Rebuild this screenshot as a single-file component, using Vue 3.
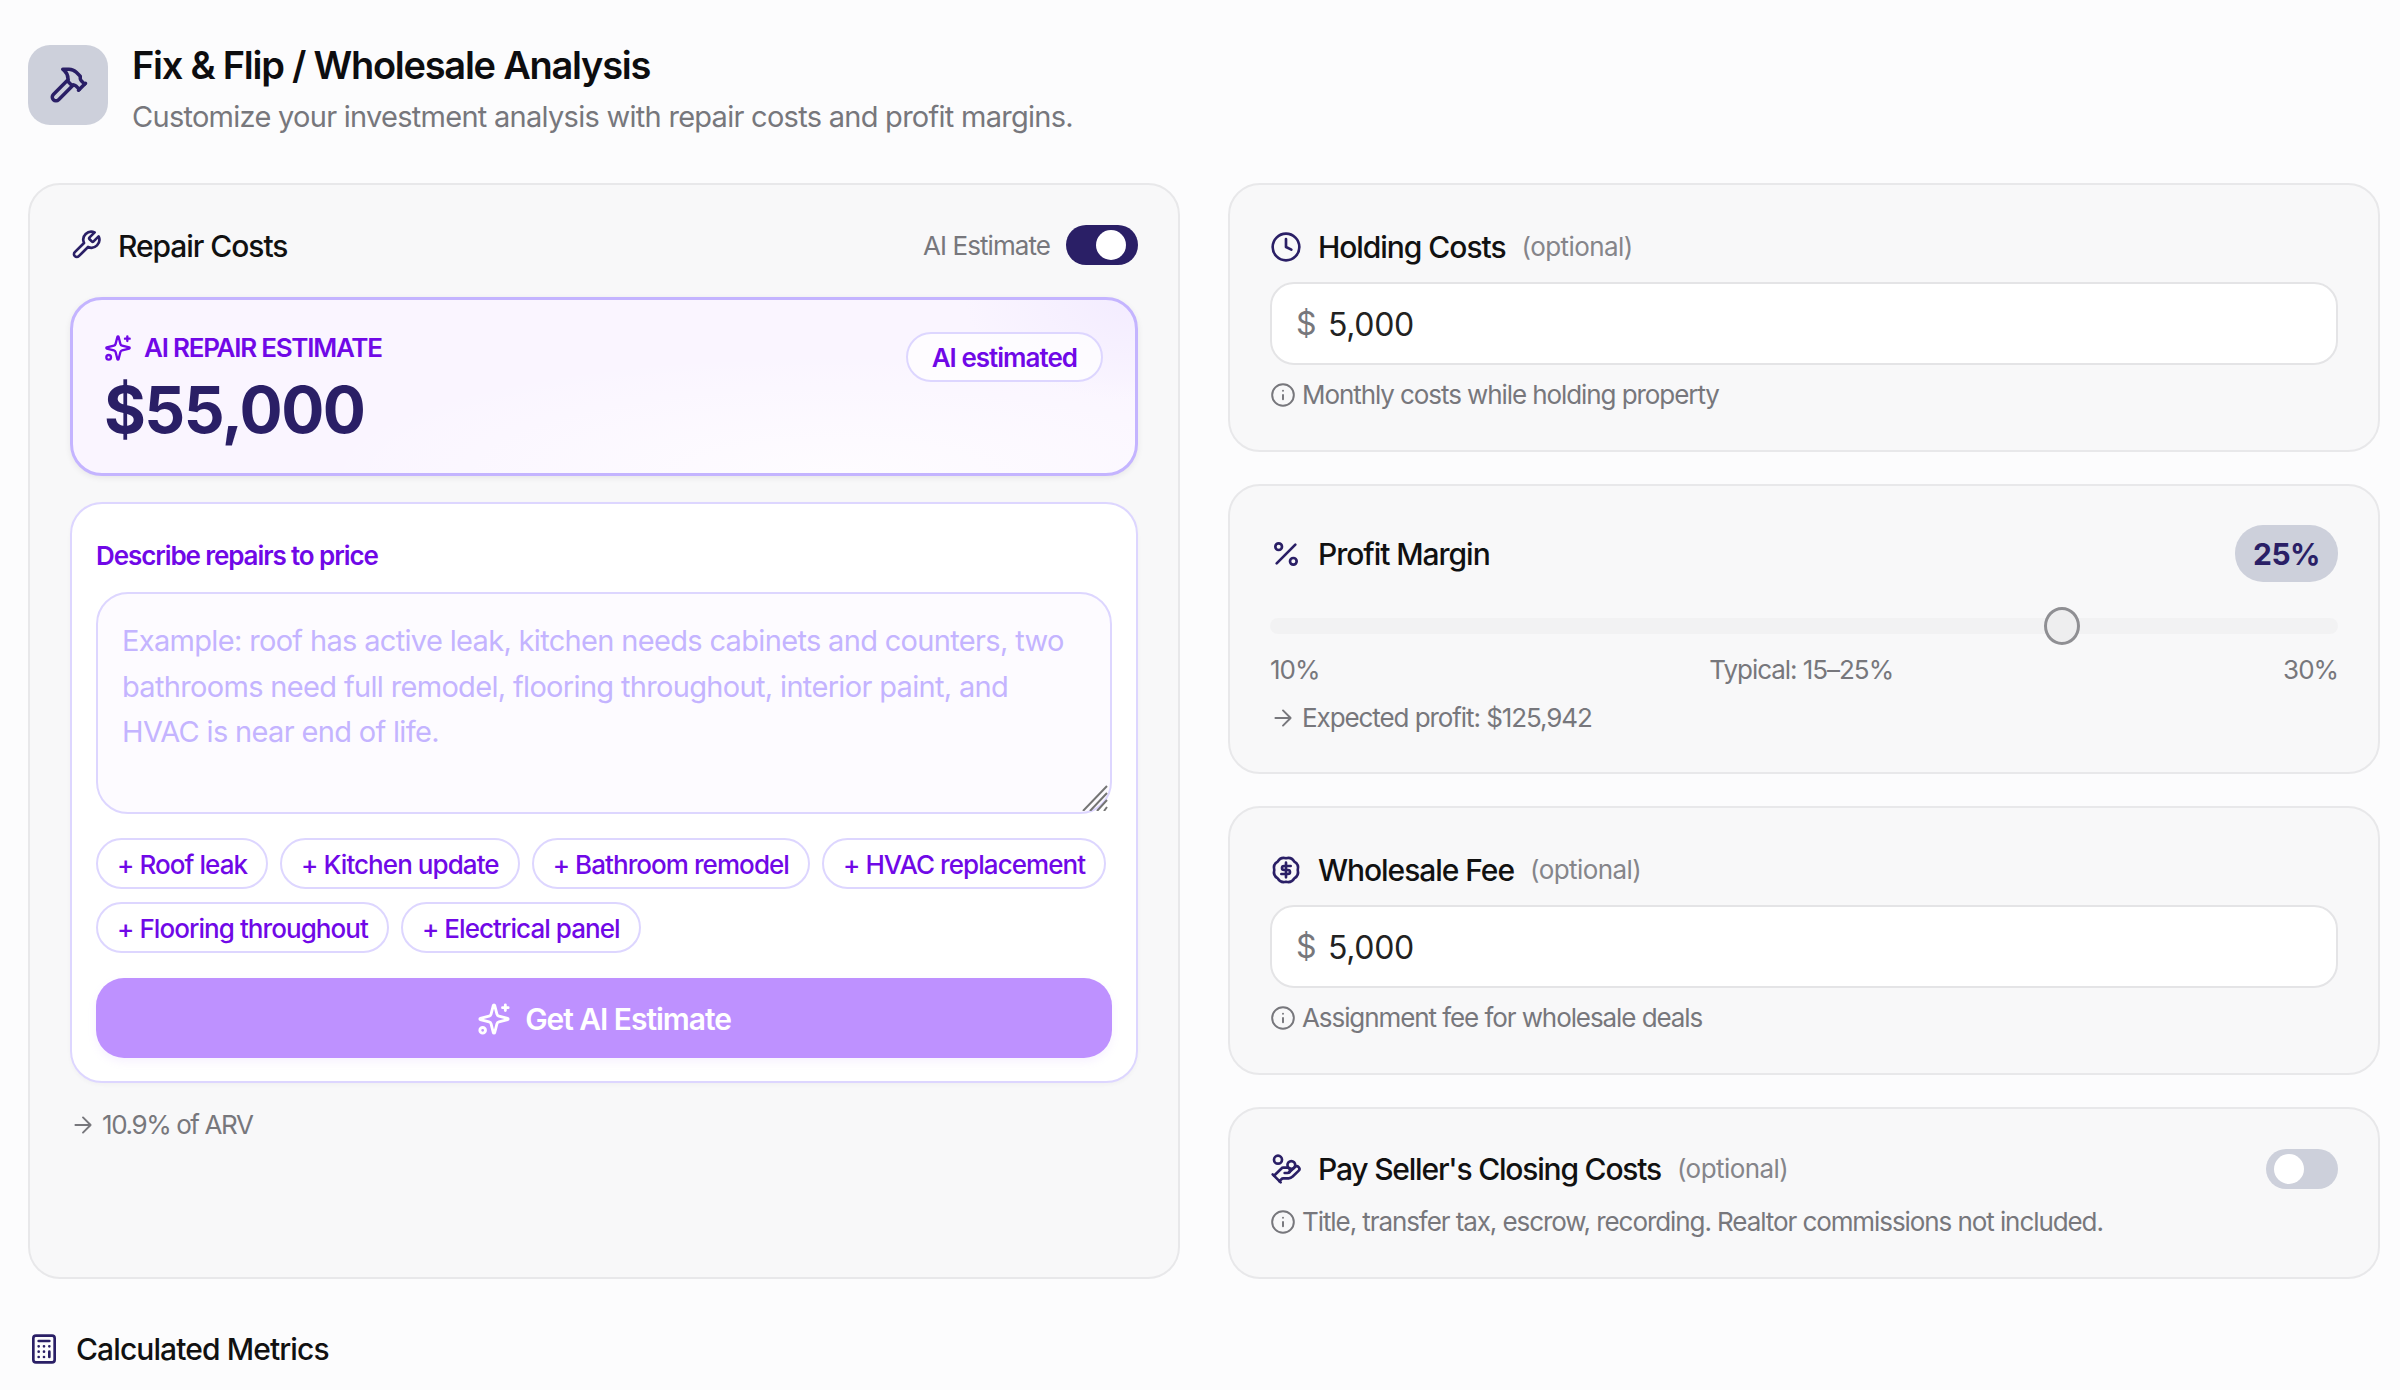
<template>
  <main class="page">
    <!-- Header -->
    <header class="head">
      <div class="head-icon">
        <svg class="ico" width="42" height="42" viewBox="0 0 24 24">
          <path d="m15 12-8.373 8.373a1 1 0 1 1-3-3L12 9" />
          <path d="m18 15 4-4" />
          <path d="m21.5 11.5-1.914-1.914A2 2 0 0 1 19 8.172V7l-2.26-2.26a6 6 0 0 0-4.202-1.756L9 2.96l.92.82A6.18 6.18 0 0 1 12 8.4V10l2 2h1.172a2 2 0 0 1 1.414.586L18.5 14.5" />
        </svg>
      </div>
      <div>
        <h1 class="title">Fix &amp; Flip / Wholesale Analysis</h1>
        <p class="sub">Customize your investment analysis with repair costs and profit margins.</p>
      </div>
    </header>

    <div class="cols">
      <!-- Repair costs -->
      <section class="card repair">
        <div class="row between">
          <div class="card-title">
            <svg class="ico" width="32" height="32" viewBox="0 0 24 24">
              <path d="M14.7 6.3a1 1 0 0 0 0 1.4l1.6 1.6a1 1 0 0 0 1.4 0l3.77-3.77a6 6 0 0 1-7.94 7.94l-6.91 6.91a2.12 2.12 0 0 1-3-3l6.91-6.91a6 6 0 0 1 7.94-7.94l-3.76 3.76z" />
            </svg>
            <span>Repair Costs</span>
          </div>
          <div class="ai-switch">
            <span>AI Estimate</span>
            <button class="toggle" :class="{ on: aiOn }" @click="aiOn = !aiOn"><i /></button>
          </div>
        </div>

        <div class="estimate">
          <div>
            <div class="est-label">
              <svg class="ico" width="28" height="28" viewBox="0 0 24 24">
                <path :d="sparkle" /><path d="M20 2v4M22 4h-4" /><circle cx="4" cy="20" r="2" />
              </svg>
              AI REPAIR ESTIMATE
            </div>
            <div class="est-value">$55,000</div>
          </div>
          <span class="badge">AI estimated</span>
        </div>

        <div class="describe">
          <label class="desc-label">Describe repairs to price</label>
          <div class="desc-wrap">
            <textarea class="desc-input" placeholder="Example: roof has active leak, kitchen needs cabinets and counters, two bathrooms need full remodel, flooring throughout, interior paint, and HVAC is near end of life." />
            <!-- resize grip -->
            <svg class="grip" width="26" height="26" viewBox="0 0 26 26">
              <path d="M1 26 25 1M8 26 25 8M15 26 25 15M22 26l3-4" />
            </svg>
          </div>
          <div class="chips">
            <button v-for="c in chips" :key="c" class="chip">+ {{ c }}</button>
          </div>
          <button class="ai-btn">
            <svg class="ico" width="34" height="34" viewBox="0 0 24 24">
              <path :d="sparkle" /><path d="M20 2v4M22 4h-4" /><circle cx="4" cy="20" r="2" />
            </svg>
            Get AI Estimate
          </button>
        </div>

        <div class="hint note">
          <svg class="ico grey" width="26" height="26" viewBox="0 0 24 24"><path d="M5 12h14M12 5l7 7-7 7" /></svg>
          <span>10.9% of ARV</span>
        </div>
      </section>

      <div class="stack">
        <!-- Holding costs -->
        <section class="card">
          <div class="card-title">
            <svg class="ico" width="32" height="32" viewBox="0 0 24 24">
              <circle cx="12" cy="12" r="10" /><path d="M12 6v6l4 2" />
            </svg>
            <span>Holding Costs</span>
            <em class="opt">(optional)</em>
          </div>
          <div class="money">
            <span>$</span>
            <input v-model="holding" />
          </div>
          <div class="hint">
            <svg class="ico grey" width="26" height="26" viewBox="0 0 24 24">
              <circle cx="12" cy="12" r="10" /><path d="M12 16v-4M12 8h.01" />
            </svg>
            <span>Monthly costs while holding property</span>
          </div>
        </section>

        <!-- Profit margin -->
        <section class="card margin">
          <div class="row between">
            <div class="card-title">
              <svg class="ico" width="32" height="32" viewBox="0 0 24 24">
                <path d="M19 5 5 19" /><circle cx="6.5" cy="6.5" r="2.5" /><circle cx="17.5" cy="17.5" r="2.5" />
              </svg>
              <span>Profit Margin</span>
            </div>
            <span class="pill">{{ margin }}%</span>
          </div>
          <input v-model="margin" class="slider" type="range" min="10" max="30" />
          <div class="scale">
            <span>10%</span>
            <span>Typical: 15–25%</span>
            <span>30%</span>
          </div>
          <div class="hint">
            <svg class="ico grey" width="26" height="26" viewBox="0 0 24 24"><path d="M5 12h14M12 5l7 7-7 7" /></svg>
            <span>Expected profit: $125,942</span>
          </div>
        </section>

        <!-- Wholesale fee -->
        <section class="card">
          <div class="card-title">
            <svg class="ico" width="32" height="32" viewBox="0 0 24 24">
              <path :d="rosette" /><path d="M15.5 9h-5a1.5 1.5 0 0 0 0 3h3a1.5 1.5 0 0 1 0 3h-5M12 6.5v11" />
            </svg>
            <span>Wholesale Fee</span>
            <em class="opt">(optional)</em>
          </div>
          <div class="money">
            <span>$</span>
            <input v-model="fee" />
          </div>
          <div class="hint">
            <svg class="ico grey" width="26" height="26" viewBox="0 0 24 24">
              <circle cx="12" cy="12" r="10" /><path d="M12 16v-4M12 8h.01" />
            </svg>
            <span>Assignment fee for wholesale deals</span>
          </div>
        </section>

        <!-- Closing costs -->
        <section class="card closing">
          <div class="row between">
            <div class="card-title">
              <svg class="ico" width="32" height="32" viewBox="0 0 24 24">
                <path d="M11 15h2a2 2 0 1 0 0-4h-3c-.6 0-1.1.2-1.4.6L3 17" />
                <path d="m7 21 1.6-1.4c.3-.4.8-.6 1.4-.6h4c1.1 0 2.1-.4 2.8-1.2l4.6-4.4a2 2 0 0 0-2.75-2.91l-4.2 3.9" />
                <path d="m2 16 6 6" />
                <circle cx="16" cy="9" r="2.9" />
                <circle cx="6" cy="5" r="3" />
              </svg>
              <span>Pay Seller's Closing Costs</span>
              <em class="opt">(optional)</em>
            </div>
            <button class="toggle" :class="{ on: closingOn }" @click="closingOn = !closingOn"><i /></button>
          </div>
          <div class="hint">
            <svg class="ico grey" width="26" height="26" viewBox="0 0 24 24">
              <circle cx="12" cy="12" r="10" /><path d="M12 16v-4M12 8h.01" />
            </svg>
            <span>Title, transfer tax, escrow, recording. Realtor commissions not included.</span>
          </div>
        </section>
      </div>
    </div>

    <div class="card-title metrics">
      <svg class="ico" width="32" height="32" viewBox="0 0 24 24">
        <rect x="4" y="2" width="16" height="20" rx="2" />
        <path d="M8 6h8M16 14v4M16 10h.01M12 10h.01M8 10h.01M12 14h.01M8 14h.01M12 18h.01M8 18h.01" />
      </svg>
      <span>Calculated Metrics</span>
    </div>
  </main>
</template>

<script setup>
import { ref } from 'vue'

const aiOn = ref(true)
const closingOn = ref(false)
const holding = ref('5,000')
const fee = ref('5,000')
const margin = ref(25)

const chips = [
  'Roof leak',
  'Kitchen update',
  'Bathroom remodel',
  'HVAC replacement',
  'Flooring throughout',
  'Electrical panel',
]

const sparkle = 'M9.937 15.5A2 2 0 0 0 8.5 14.063l-6.135-1.582a.5.5 0 0 1 0-.962L8.5 9.936A2 2 0 0 0 9.937 8.5l1.582-6.135a.5.5 0 0 1 .963 0L14.063 8.5A2 2 0 0 0 15.5 9.937l6.135 1.581a.5.5 0 0 1 0 .964L15.5 14.063a2 2 0 0 0-1.437 1.437l-1.582 6.135a.5.5 0 0 1-.963 0z'

// scalloped badge outline, eight lobes
function scallop(lobes, r) {
  let d = ''
  for (let i = 0; i <= lobes; i++) {
    const a = (i / lobes) * Math.PI * 2
    const x = (12 + r * Math.cos(a)).toFixed(2)
    const y = (12 + r * Math.sin(a)).toFixed(2)
    d += i === 0 ? `M${x} ${y}` : `A5.5 5.5 0 0 1 ${x} ${y}`
  }
  return d + 'z'
}
const rosette = scallop(8, 8.8)
</script>

<style scoped>
.page {
  font-family: 'Inter', 'Noto Sans', sans-serif;
  padding: 45px 20px 0 28px;
  color: #111;
  letter-spacing: -0.56px;
}

.ico {
  fill: none;
  stroke: #2a1f66;
  stroke-width: 2;
  stroke-linecap: round;
  stroke-linejoin: round;
  flex: none;
}
.ico.grey { stroke: #77777c; stroke-width: 1.8; }

.head { display: flex; gap: 24px; align-items: flex-start; margin-bottom: 50px; }
.head-icon {
  width: 80px;
  height: 80px;
  border-radius: 22px;
  background: #cdd0db;
  display: flex;
  align-items: center;
  justify-content: center;
}
.title { margin: 0; font-size: 38px; line-height: 40px; font-weight: 600; color: #0d0d0f; letter-spacing: -0.033em; }
.sub { margin: 16px 0 0; font-size: 29px; line-height: 32px; color: #77777c; font-weight: 400; letter-spacing: -0.025em; }

.cols { display: grid; grid-template-columns: 1fr 1fr; gap: 48px; }
.stack { display: flex; flex-direction: column; gap: 32px; min-width: 0; }

.card {
  background: #f8f8f9;
  border: 2px solid #e8e8ea;
  border-radius: 32px;
  padding: 44px 40px 39px;
  min-width: 0;
}
.card.repair { padding-top: 40px; }
.card.margin { padding-top: 39px; padding-bottom: 38px; }
.card.closing { padding-top: 40px; }

.row { display: flex; align-items: center; }
.between { justify-content: space-between; }

.card-title {
  display: flex;
  align-items: center;
  gap: 16px;
  font-size: 30px;
  line-height: 36px;
  font-weight: 500;
  color: #111;
  letter-spacing: -0.035em;
}
.repair .card-title span { position: relative; top: 1px; }
.closing .card-title { letter-spacing: -0.04em; }
.opt { font-style: normal; font-weight: 400; font-size: 26px; color: #85858a; letter-spacing: -0.0215em; }

.ai-switch { display: flex; align-items: center; gap: 16px; font-size: 26px; color: #77777c; letter-spacing: -0.036em; }

.toggle {
  width: 72px;
  height: 40px;
  padding: 5px 12px 5px 8px;
  border: 0;
  border-radius: 20px;
  background: #cdd0db;
  display: flex;
  cursor: pointer;
}
.toggle i { width: 30px; height: 30px; border-radius: 50%; background: #fff; }
.toggle.on { background: #2a1f66; justify-content: flex-end; }

.estimate {
  margin-top: 32px;
  border: 3px solid #c4b4ff;
  border-radius: 32px;
  padding: 32px 32px 27px 31px;
  background:
    radial-gradient(170px 100px at 100% 0, #f3ecff, rgba(243, 236, 255, 0)),
    radial-gradient(520px 120px at 72% 100%, #fefcff, rgba(254, 252, 255, 0)),
    #faf5ff;
  box-shadow: 0 2px 6px rgba(0, 0, 0, 0.07);
  display: flex;
  justify-content: space-between;
  align-items: flex-start;
}
.est-label {
  display: flex;
  align-items: center;
  gap: 12px;
  font-size: 26px;
  line-height: 32px;
  font-weight: 600;
  color: #7008e7;
  letter-spacing: -0.048em;
}
.est-label .ico { stroke: #7008e7; }
.est-value { margin-top: 10px; font-size: 64px; line-height: 72px; font-weight: 700; color: #2a1f66; letter-spacing: -0.024em; }
.badge {
  height: 50px;
  box-sizing: border-box;
  padding: 0 24px;
  display: flex;
  align-items: center;
  border: 2px solid #ddd6ff;
  border-radius: 25px;
  background: rgba(255, 255, 255, 0.7);
  color: #7008e7;
  font-size: 26px;
  font-weight: 600;
  letter-spacing: -0.038em;
}

.describe {
  margin-top: 26px;
  background: #fff;
  border: 2px solid #ddd6ff;
  border-radius: 32px;
  padding: 36px 24px 23px;
  box-shadow: 0 2px 4px rgba(0, 0, 0, 0.03);
}
.desc-label { display: block; font-size: 26px; line-height: 32px; font-weight: 600; color: #7008e7; letter-spacing: -0.042em; }
.desc-wrap { position: relative; margin-top: 20px; }
.desc-input {
  display: block;
  width: 100%;
  height: 222px;
  box-sizing: border-box;
  padding: 24px 24px 16px;
  border: 2px solid #ddd6ff;
  border-radius: 32px;
  background: #fdfbff;
  font: inherit;
  font-size: 29px;
  line-height: 45.5px;
  letter-spacing: -0.023em;
  outline: none;
  resize: none;
}
.desc-input::placeholder { color: #c4b4ff; opacity: 1; }
.grip {
  position: absolute;
  right: 4px;
  bottom: 3px;
  fill: none;
  stroke: #757575;
  stroke-width: 2;
  pointer-events: none;
}

.chips { display: flex; flex-wrap: wrap; gap: 13px 12px; margin-top: 24px; }
.chip {
  height: 51px;
  padding: 2px 19px 0;
  background: #fff;
  border: 2px solid #ddd6ff;
  border-radius: 26px;
  color: #7008e7;
  font: inherit;
  font-size: 26px;
  font-weight: 550;
  letter-spacing: -0.036em;
  cursor: pointer;
}

.ai-btn {
  width: 100%;
  height: 80px;
  margin-top: 25px;
  padding: 2px 0 0;
  border: 0;
  border-radius: 28px;
  background: #be91ff;
  color: #fff;
  font: inherit;
  font-size: 30px;
  font-weight: 600;
  letter-spacing: -0.035em;
  display: flex;
  align-items: center;
  justify-content: center;
  gap: 14px;
  box-shadow: 0 4px 8px rgba(190, 145, 255, 0.12);
}
.ai-btn .ico { stroke: #fff; }

.money {
  margin-top: 17px;
  height: 83px;
  box-sizing: border-box;
  background: #fff;
  border: 2px solid #e4e4e6;
  border-radius: 24px;
  padding: 0 24px;
  display: flex;
  align-items: center;
  gap: 10px;
  font-size: 32px;
  color: #77777c;
}
.money input {
  flex: 1;
  border: 0;
  outline: none;
  background: transparent;
  font: inherit;
  letter-spacing: -0.01em;
  color: #222;
  position: relative;
  top: 1px;
}

.hint {
  display: flex;
  align-items: center;
  gap: 6px;
  margin-top: 14px;
  font-size: 26px;
  line-height: 32px;
  color: #77777c;
  font-weight: 400;
  letter-spacing: -0.0415em;
}
.closing .hint { margin-top: 17px; }
.note { margin-top: 24px; line-height: 36px; letter-spacing: -0.054em; }

.pill {
  height: 57px;
  width: 103px;
  border-radius: 28px;
  background: #cdd0db;
  color: #2a1f66;
  font-size: 30px;
  font-weight: 700;
  display: flex;
  align-items: center;
  justify-content: center;
}

.slider {
  display: block;
  width: 100%;
  height: 40px;
  margin: 24px 0 0;
  background: transparent;
  appearance: none;
  -webkit-appearance: none;
}
.slider::-webkit-slider-runnable-track { height: 16px; border-radius: 8px; background: #f2f2f3; }
.slider::-webkit-slider-thumb {
  -webkit-appearance: none;
  width: 36px;
  height: 38px;
  margin-top: -11px;
  box-sizing: border-box;
  border: 3px solid #8f8f93;
  border-radius: 50%;
  background: #eeeeef;
}

.scale {
  display: flex;
  justify-content: space-between;
  margin-top: 8px;
  font-size: 26px;
  line-height: 32px;
  color: #77777c;
  letter-spacing: -0.04em;
}
.scale + .hint { margin-top: 16px; }

.metrics { margin-top: 52px; letter-spacing: -0.03em; }
</style>

<style>
body { background: #fcfcfd; }
</style>
